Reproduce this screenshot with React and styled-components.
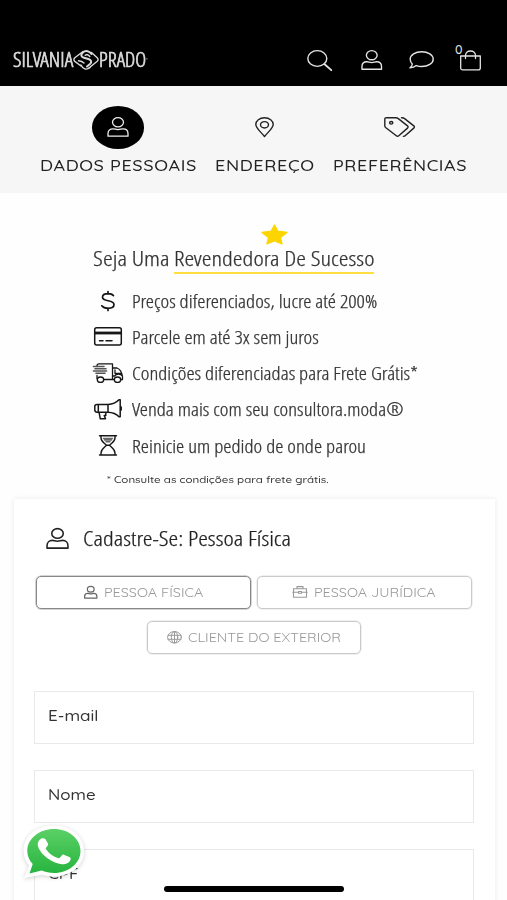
import React, { useLayoutEffect, useRef, useState } from 'react';
import styled, { createGlobalStyle } from 'styled-components';

const Global = createGlobalStyle`
  * { box-sizing: border-box; }
  body { margin: 0; background: #fff; overflow: hidden; }
`;

const condensed = `"Open Sans Condensed Light", "Open Sans", "Noto Sans", sans-serif`;
const rounded = `Quicksand, Inter, "Open Sans", sans-serif`;

const Page = styled.div`
  position: relative;
  width: 507px;
  height: 900px;
  overflow: hidden;
  background: #fefefe;
  color: #333;
`;

/* Text set to an exact measure, whatever the natural width of the font. */
const Measure = styled.span`
  display: block;
  flex: none;
  width: ${(p) => p.$w}px;
  height: ${(p) => p.$lh}px;
  line-height: ${(p) => p.$lh}px;
  font-size: ${(p) => p.$size}px;
  font-weight: ${(p) => p.$weight};
  font-family: ${(p) => (p.$round ? rounded : condensed)};
  font-stretch: ${(p) => (p.$round ? '100%' : '75%')};
  font-feature-settings: ${(p) => (p.$round ? '"cv11" 1' : 'normal')};
  letter-spacing: ${(p) => p.$track}px;
  -webkit-text-stroke: ${(p) => p.$bold}px currentColor;
  white-space: nowrap;
`;
const Glyphs = styled.span`
  display: inline-block;
  transform-origin: 0 50%;
`;

function Text({ w, lh, size, weight = 300, round = false, track = 0, bold = round ? 0 : 0.25, children }) {
  const ref = useRef(null);
  const [scale, setScale] = useState(1);
  useLayoutEffect(() => {
    setScale(w / (ref.current.offsetWidth - track));
  }, [w, track, children]);
  return (
    <Measure $w={w} $lh={lh} $size={size} $weight={weight} $round={round} $track={track} $bold={bold}>
      <Glyphs ref={ref} style={{ transform: `scaleX(${scale})` }}>{children}</Glyphs>
    </Measure>
  );
}

const Icon = styled.svg`
  display: block;
  flex: none;
  overflow: visible;
  fill: none;
  stroke: currentColor;
  stroke-width: ${(p) => p.$stroke || 1.4};
  stroke-linecap: round;
  stroke-linejoin: round;
`;

const UserIcon = ({ w, h, stroke }) => (
  <Icon width={w} height={h} viewBox="0 0 22 20" preserveAspectRatio="none" $stroke={stroke}>
    <ellipse cx="11" cy="5.2" rx="5.5" ry="4.6" />
    <path d="M1 19.2v-2.6c0-3 2.2-4.8 5-4.8 1.900 0 2.600.8 5 .8s3.100-.8 5-.8c2.800 0 5 1.800 5 4.800v2.600z" />
  </Icon>
);

const Header = styled.header`
  display: flex;
  align-items: flex-start;
  height: 85.500px;
  padding: 45px 26px 0 12.500px;
  background: #000;
  color: #e4e4e4;
`;
const Brand = styled.div`
  display: flex;
  align-items: center;
  height: 30px;
  margin-right: auto;
  color: #dadada;
`;
const Tools = styled.div`
  display: flex;
  align-items: center;
  height: 30px;
`;
const Tool = styled.div`
  margin-left: ${(p) => p.$gap}px;
`;
const Bag = styled.div`
  position: relative;
  margin-left: 26.500px;
`;
const Count = styled.div`
  position: absolute;
  left: -5px;
  top: -7.500px;
`;

const Steps = styled.nav`
  display: flex;
  justify-content: flex-start;
  gap: 18.500px;
  height: 107.500px;
  padding: 20.500px 0 0 39.500px;
  background: #f6f6f6;
  color: #222;
`;
const Step = styled.div`
  display: flex;
  flex-direction: column;
  align-items: center;
`;
const StepMark = styled.div`
  display: grid;
  place-items: center;
  width: 52px;
  height: 42.500px;
  margin-bottom: 7px;
  border-radius: 50%;
  background: ${(p) => (p.$active ? '#000' : 'transparent')};
  color: ${(p) => (p.$active ? '#eee' : '#222')};
`;

const Benefits = styled.section`
  display: flex;
  flex-direction: column;
  height: 306px;
  padding: 31px 0 0 93px;
`;
const Star = styled.div`
  margin-left: 167.500px;
`;
const Headline = styled.h1`
  display: flex;
  margin: 0 0 8.500px;
`;
const Underlined = styled.span`
  margin-left: 4px;
  border-bottom: 2px solid #ffdf3f;
`;
const Benefit = styled.div`
  display: flex;
  align-items: center;
  height: 36.250px;
  color: #333;
`;
const BenefitMark = styled.div`
  display: grid;
  place-items: center;
  width: 30px;
  margin-right: 8.500px;
  color: #161616;
`;
const Note = styled.div`
  margin: 8px 0 0 13.500px;
  color: #333;
`;

const Card = styled.section`
  width: 481px;
  height: 460px;
  margin-left: 13.500px;
  padding: 24px 21px 0 20.500px;
  background: #fff;
  box-shadow: 0 0 5px rgba(0, 0, 0, 0.09);
`;
const CardTitle = styled.h2`
  display: flex;
  align-items: center;
  height: 30px;
  margin: 0 0 23px;
  padding-left: 12px;
  gap: 14px;
  color: #222;
`;
const Choices = styled.div`
  display: flex;
  flex-wrap: wrap;
  justify-content: center;
  gap: 12px 6.500px;
  margin-bottom: 37px;
`;
const Choice = styled.div`
  display: flex;
  align-items: center;
  justify-content: center;
  gap: 6px;
  width: 214.500px;
  height: 33px;
  padding-bottom: 2px;
  border: ${(p) => (p.$active ? '1px solid #888' : '1px solid #cacaca')};
  box-shadow: 0 0 0 0.5px ${(p) => (p.$active ? '#aaa' : '#e2e2e2')};
  border-radius: 5px;
  color: #999;
`;
const ChoiceMark = styled.div`
  padding-top: 1px;
  color: ${(p) => (p.$active ? '#666' : '#999')};
`;
const Field = styled.div`
  height: 53px;
  margin-bottom: 26px;
  padding: 13px 13px;
  border: 1.500px solid #e9e9e9;
  background: #fff;
  color: #333;
`;

const Chat = styled.div`
  position: absolute;
  left: 21px;
  top: 823px;
  filter: drop-shadow(0 1px 2px rgba(0, 0, 0, 0.18));
`;
const HomeBar = styled.div`
  position: absolute;
  left: 164px;
  top: 885.500px;
  width: 180px;
  height: 6px;
  border-radius: 3px;
  background: #000;
`;

const Emblem = () => (
  <Icon width="26" height="22" viewBox="0 0 26 22" $stroke={1.4}>
    <path d="M10 2.500 1.800 8.800c-1.200 1.200-1.200 2.400 0 3.600L8 17" />
    <path d="M18.500 3.500 24.200 8.700c1.200 1.200 1.200 2.400 0 3.600L16 19" />
    <path d="M18.500 5c-1.700-3-6-4-8.600-1.600-2.500 2.300-2 4.500 1 5.300l4.500 1.300c3.200 1 3.600 3.200 1.600 5L14 17.500" strokeWidth="2" />
    <path d="M5.500 11.800c2 .2 4 .8 5.500 2.200M8 16c1.800 4.200 5.500 5.500 9 2.500M16.800 7.500c-1.500-1.800-3.500-2.300-4.600-1.300" />
  </Icon>
);

const DollarIcon = () => (
  <Icon width="14" height="20" viewBox="0 0 14 20" $stroke={1.7}>
    <path d="M7 .5v2.300M7 17.200v2.300M12.500 4.700C11.500 3.400 9.500 2.700 7 2.700c-3.400 0-5.500 1.300-5.500 3.500C1.500 11 13 8.500 13 13.500c0 2.400-2.500 3.800-6 3.800-2.800 0-5-.9-6.200-2.500" />
  </Icon>
);
const CardIcon = () => (
  <Icon width="28" height="19" viewBox="0 0 28 19" $stroke={1.5}>
    <rect x=".7" y=".7" width="26.600" height="17.300" rx="2" />
    <path d="M1 6h26" strokeWidth="2.800" strokeLinecap="butt" />
    <path d="M5.500 13.700h3.500M12 13.700h6" />
  </Icon>
);
const TruckIcon = () => (
  <Icon width="31" height="20" viewBox="0 0 31 20" $stroke={1.300}>
    <path d="M4 3.500V2.800C4 1.600 5 .8 6 .8h13.500v15.700M10.500 16.500h10M19.500 5h4.500c3 1 5 5.500 5.500 8.500v3h-2M19.500 16.500h2M19.500 13h2c2-2.500 6-2.500 8 0M22 7v3.500h6M4 12.500v3" />
    <path d="M.5 3.500H11M2 5.700h11M.5 8h13M3 10.200h9" stroke="#555" strokeWidth="1.600" />
    <ellipse cx="7.500" cy="16.700" rx="3.200" ry="2.700" />
    <ellipse cx="24.500" cy="16.700" rx="3.200" ry="2.700" />
  </Icon>
);
const HornIcon = () => (
  <Icon width="28" height="21" viewBox="0 0 28 21" $stroke={1.500}>
    <path d="M14 5.500H3C1.500 5.500.8 6.500.8 7.600v3.200c0 1.400.9 2.400 2.200 2.400h11zM14 5.500c5-.2 8.500-2 11-4.700h1.200v17H25c-2.500-2.700-6-4.400-11-4.600M4.300 5.500v7.700M5 13.200l1.300 6.600h5.200l-1.300-3.300h1.600v-3.300M27.200 8v3" />
  </Icon>
);
const HourglassIcon = () => (
  <Icon width="18" height="21" viewBox="0 0 18 21" $stroke={1.400}>
    <path d="M.5.8h17M.5 20h17M2 1v2c0 4 3.500 5 5.500 7.200C5.500 12.500 2 14 2 18v2M16 1v2c0 4-3.500 5-5.500 7.200 2 2.300 5.500 3.800 5.500 7.800v2M7.500 10.200h3" />
    <path d="M4.500 3.500h9M5.500 5h7M7 6.700h4" stroke="#666" />
  </Icon>
);

const benefits = [
  { icon: <DollarIcon />, w: 245.5, text: 'Preços diferenciados, lucre até 200%' },
  { icon: <CardIcon />, w: 187, text: 'Parcele em até 3x sem juros' },
  { icon: <TruckIcon />, w: 286, text: 'Condições diferenciadas para Frete Grátis*' },
  { icon: <HornIcon />, w: 271.5, text: 'Venda mais com seu consultora.moda®' },
  { icon: <HourglassIcon />, w: 233.5, text: 'Reinicie um pedido de onde parou' },
];

export default function App() {
  return (
    <Page>
      <Global />
      <Header>
        <Brand>
          <Text w={60} lh={30} size={20} weight={400} bold={0.7}>SILVANIA</Text>
          <Emblem />
          <Text w={47.5} lh={30} size={20} weight={400} bold={0.7}>PRADO</Text>
          <Text w={2} lh={16} size={4} bold={0}>™</Text>
        </Brand>
        <Tools>
          <Tool>
            <Icon width="25" height="21" viewBox="0 0 25 21">
              <ellipse cx="10.300" cy="8.500" rx="9.500" ry="7.900" />
              <path d="m17.300 14 7 6.200" strokeWidth="1.800" />
            </Icon>
          </Tool>
          <Tool $gap={29.5}><UserIcon w={21.5} h={20} /></Tool>
          <Tool $gap={26}>
            <Icon width="25" height="18" viewBox="0 0 25 18">
              <path d="M12.700.8c6.400 0 11.500 3.300 11.500 7.400s-5.100 7.300-11.500 7.300c-2 0-3.800-.3-5.400-.9-1.600 1.500-3.800 2.300-6.300 2.300 1.300-1 2.200-2.500 2.300-4C1.900 11.600 1.200 10 1.200 8.200c0-4.100 5.100-7.400 11.500-7.400z" />
            </Icon>
          </Tool>
          <Bag>
            <Icon width="21" height="21" viewBox="0 0 21 21" $stroke={1.3}>
              <path d="M.7 6h19.600v12c0 1.200-.7 1.900-2 1.900H2.700c-1.300 0-2-.7-2-1.900zM5.500 8.500V5.500C5.500 3 7.500 1 10.500 1s5 2 5 4.500v3" />
            </Icon>
            <Count><Text w={8} lh={14} size={12.5} weight={500} round>0</Text></Count>
          </Bag>
        </Tools>
      </Header>

      <Steps>
        <Step>
          <StepMark $active><UserIcon w={22} h={20} stroke={1.3} /></StepMark>
          <Text w={157} lh={20} size={14.5} weight={500} round track={0.5}>DADOS PESSOAIS</Text>
        </Step>
        <Step>
          <StepMark>
            <Icon width="19" height="20" viewBox="0 0 19 20">
              <path d="M9.500 19.500C6.500 15.500.8 11.300.8 7.500.8 3.800 4.500.8 9.500.8s8.700 3 8.700 6.700c0 3.800-5.700 8-8.700 12z" />
              <ellipse cx="9.500" cy="7.800" rx="4" ry="3.200" />
            </Icon>
          </StepMark>
          <Text w={99} lh={20} size={14.5} weight={500} round track={0.5}>ENDEREÇO</Text>
        </Step>
        <Step>
          <StepMark>
            <Icon width="31" height="20" viewBox="0 0 31 20">
              <path d="M.8 2.200C.8 1.200 1.400.7 2.500.7h9.300c.9 0 1.600.2 2.200.7l9.500 7.500c.8.700.8 1.500 0 2.200l-8.700 7.700c-.8.700-1.700.7-2.500 0L1.600 10.500c-.5-.5-.8-1-.8-1.800z" />
              <path d="M17.500.7h.7c.8 0 1.500.2 2.100.7l9.500 7.500c.8.700.8 1.500 0 2.200l-8.700 7.700c-.5.500-1 .6-1.700.6" />
              <ellipse cx="7.200" cy="5.800" rx="1.600" ry="1.300" />
            </Icon>
          </StepMark>
          <Text w={134} lh={20} size={14.5} weight={500} round track={0.5}>PREFERÊNCIAS</Text>
        </Step>
      </Steps>

      <Benefits>
        <Star>
          <svg width="27" height="21" viewBox="0 0 27 21" display="block">
            <path d="M13.500 1 17 7.200l9 1.200-6.500 5 1.600 6.600-7.600-3.100L5.900 20l1.600-6.600L1 8.400l9-1.200z" fill="#fcd500" stroke="#fcd500" strokeWidth="1.200" strokeLinejoin="round" />
          </svg>
        </Star>
        <Headline>
          <Text w={77} lh={27} size={20.5}>Seja Uma</Text>
          <Underlined><Text w={200} lh={27} size={20.5}>Revendedora De Sucesso</Text></Underlined>
        </Headline>
        {benefits.map((b) => (
          <Benefit key={b.text}>
            <BenefitMark>{b.icon}</BenefitMark>
            <Text w={b.w} lh={36} size={17.5}>{b.text}</Text>
          </Benefit>
        ))}
        <Note><Text w={221} lh={16} size={10} weight={500} round>* Consulte as condições para frete grátis.</Text></Note>
      </Benefits>

      <Card>
        <CardTitle>
          <UserIcon w={23} h={21} stroke={1.5} />
          <Text w={208} lh={30} size={20.5}>Cadastre-Se: Pessoa Física</Text>
        </CardTitle>
        <Choices>
          <Choice $active>
            <ChoiceMark $active><UserIcon w={13.5} h={12.5} stroke={2} /></ChoiceMark>
            <Text w={99} lh={30} size={12.5} weight={450} round>PESSOA FÍSICA</Text>
          </Choice>
          <Choice>
            <ChoiceMark>
              <Icon width="16" height="12" viewBox="0 0 16 12" $stroke={1.1}>
                <path d="M1.500 2.800h13v8.400h-13zM5 2.800V.6h6v2.200M.8 6.300h5.700M9.500 6.300h5.700M6.500 5.500h3v1.800h-3z" />
              </Icon>
            </ChoiceMark>
            <Text w={122} lh={30} size={12.5} weight={450} round>PESSOA JURÍDICA</Text>
          </Choice>
          <Choice>
            <ChoiceMark>
              <Icon width="15" height="12.5" viewBox="0 0 15 12.500" $stroke={1}>
                <ellipse cx="7.500" cy="6.250" rx="6.900" ry="5.700" />
                <ellipse cx="7.500" cy="6.250" rx="3.200" ry="5.700" />
                <path d="M7.500.6v11.300M1.200 4.300h12.600M1.200 8.300h12.600" />
              </Icon>
            </ChoiceMark>
            <Text w={153} lh={30} size={12.5} weight={450} round>CLIENTE DO EXTERIOR</Text>
          </Choice>
        </Choices>
        <Field><Text w={50} lh={22} size={14} weight={500} round>E-mail</Text></Field>
        <Field><Text w={48} lh={22} size={14} weight={500} round>Nome</Text></Field>
        <Field><Text w={30} lh={22} size={14} weight={500} round>CPF</Text></Field>
      </Card>

      <Chat>
        <svg width="66" height="58" viewBox="0 0 66 58" display="block">
          <defs>
            <linearGradient id="bubble" x1="0" y1="0" x2="0" y2="1">
              <stop offset="0" stopColor="#5bd066" />
              <stop offset="1" stopColor="#27b43e" />
            </linearGradient>
          </defs>
          <path d="M32.500 2.500c17.500 0 30.500 11 30.500 25.500S50 53.500 32.500 53.500c-4 0-7.800-.6-11.200-1.800L3 55l5-12.500C4.500 38.500 2.500 33.500 2.500 28c0-14.500 12.500-25.500 30-25.500z" fill="#fff" />
          <path d="M33 6c14.800 0 26.500 9.700 26.500 22S47.800 50 33 50c-4.500 0-8.700-.9-12.400-2.500L8.500 50.500l3.200-9.500C8.300 37.400 6.300 33 6.300 28 6.300 15.700 18.200 6 33 6z" fill="url(#bubble)" />
          <path d="M19 16.500c1.500-1.700 4.200-1.800 5.500-.2l2.300 4c.7 1.400.2 2.400-1.600 4.200-.6.600-.5 1.100-.1 1.800 2.500 4 6.600 6.900 11.700 8.800.9.300 1.500.2 2-.4l2-2.300c.8-.9 1.500-1 2.600-.5l5 2.100c1.200.6 1.500 1 1.200 2.200-.7 3.300-4.200 5-8.300 5-9.500-.6-23.500-10.500-24.600-19.500 0-2.200.9-3.800 2.300-5.200z" fill="#fff" />
        </svg>
      </Chat>
      <HomeBar />
    </Page>
  );
}
